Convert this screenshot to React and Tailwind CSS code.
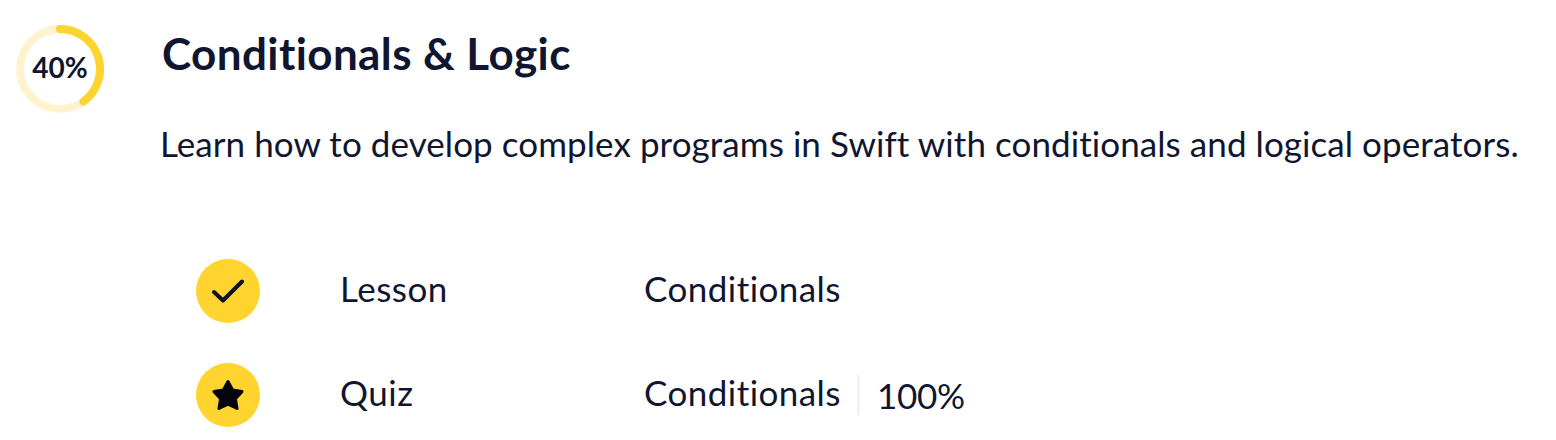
import React from 'react';

const ink = 'text-[#10162f]';

const ProgressRing = () => (
  <div className="relative w-[88px] h-[88px] shrink-0">
    <svg width="88" height="88" viewBox="0 0 88 88" fill="none">
      <circle cx="44" cy="44" r="40" stroke="#fff3cf" strokeWidth="8" />
      <path d="M44 4 A40 40 0 0 1 67.5 76.4" stroke="#ffd42f" strokeWidth="8" strokeLinecap="round" />
    </svg>
    <span className={`absolute inset-0 flex items-center justify-center text-[28px] font-bold pb-1 ${ink}`}>40%</span>
  </div>
);

const CheckIcon = () => (
  <svg width="32" height="32" viewBox="0 0 32 32" fill="none">
    <path d="M2 17 L11 25.5 L30 6.5" stroke="#0c1126" strokeWidth="4" strokeLinecap="round" strokeLinejoin="round" />
  </svg>
);

const StarIcon = () => (
  <svg width="32" height="32" viewBox="0 0 32 32" fill="#03040c">
    <path d="M16 2.5 L20.6 11 L30 12.6 L23.4 19.6 L25 29.5 L16 25.2 L7 29.5 L8.6 19.6 L2 12.6 L11.4 11 Z" stroke="#03040c" strokeWidth="3" strokeLinejoin="round" />
  </svg>
);

const Row = ({ icon, type, title, score }) => (
  <div className="flex items-center h-[64px]">
    <span className="w-[64px] h-[64px] rounded-full bg-[#ffd42f] flex items-center justify-center shrink-0">{icon}</span>
    <span className={`ml-[80px] w-[304px] pb-[6px] text-[35px] tracking-[0.5px] ${ink}`}>{type}</span>
    <span className={`pb-[6px] text-[35px] tracking-[0.45px] ${ink}`}>{title}</span>
    {score && (
      <span className={`ml-[16px] pl-[17px] border-l-[3px] border-[#f3f3f5] h-[40px] flex items-center text-[35px] tracking-[-0.3px] ${ink}`}>{score}</span>
    )}
  </div>
);

export default function App() {
  return (
    <div className="w-[1556px] h-[440px] bg-white overflow-hidden font-['Lato',sans-serif] [font-variant-ligatures:none] pl-4 pt-[25px] flex">
      <ProgressRing />
      <div className="ml-[57px] flex flex-col">
        <h2 className={`text-[44px] leading-[56px] font-bold ml-[1px] tracking-[0.4px] ${ink}`}>Conditionals &amp; Logic</h2>
        <p className={`text-[35px] leading-[48px] mt-[38px] -ml-[1px] tracking-[0.07px] whitespace-nowrap ${ink}`}>Learn how to develop complex programs in Swift with conditionals and logical operators.</p>
        <div className="flex flex-col gap-[40px] mt-[92px] ml-[35px]">
          <Row icon={<CheckIcon />} type="Lesson" title="Conditionals" />
          <Row icon={<StarIcon />} type="Quiz" title="Conditionals" score="100%" />
        </div>
      </div>
    </div>
  );
}
